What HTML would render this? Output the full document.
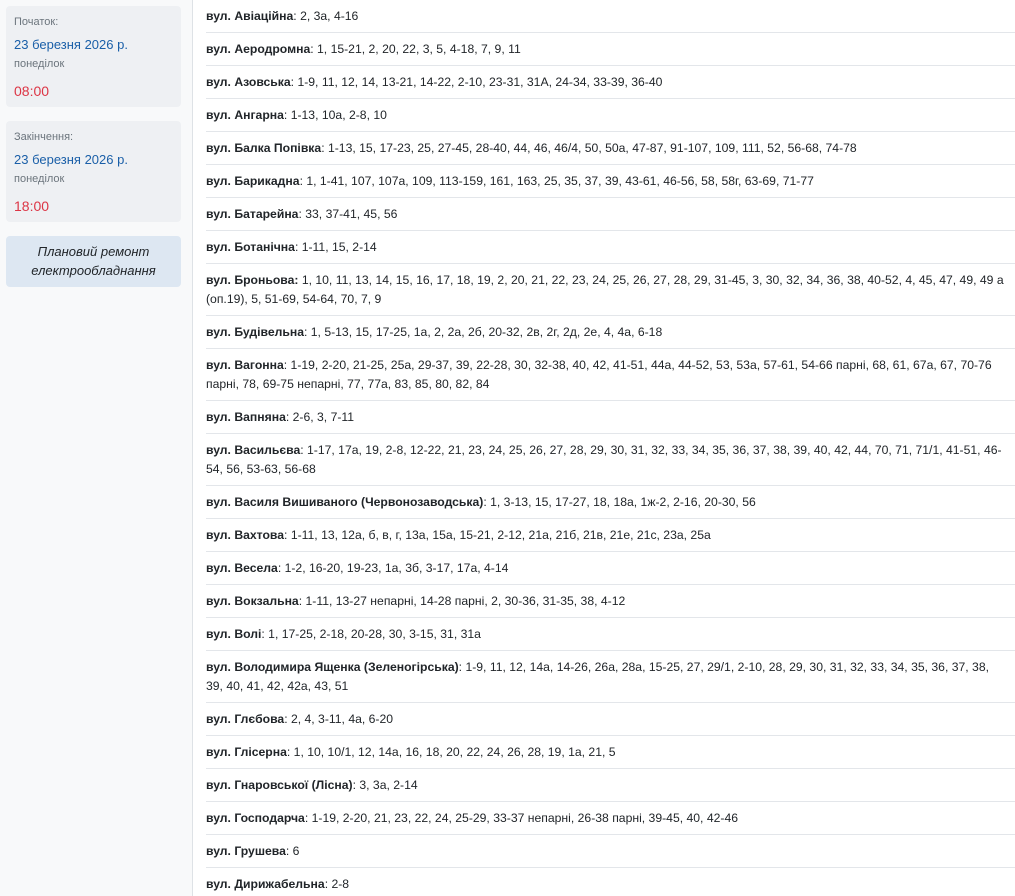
<!DOCTYPE html>
<html><head><meta charset="utf-8"><style>
*{box-sizing:border-box;margin:0;padding:0}
html,body{width:1015px;height:896px;overflow:hidden}
body{background:#fff;font-family:"Liberation Sans","DejaVu Sans",sans-serif;color:#212529;position:relative}
.side{position:absolute;left:0;top:0;width:193px;height:896px;background:#f8f9fa;border-right:1px solid #dee2e6}
.card{position:absolute;left:6px;width:175px;background:#eef0f3;border-radius:4px;padding:0 8px}
.lbl{font-size:11px;color:#6c757d;position:absolute;left:8px}
.dt{font-size:13px;color:#1a5fa8;position:absolute;left:8px}
.tm{font-size:14px;color:#dc3545;position:absolute;left:8px}
.note{position:absolute;left:6px;top:236px;width:175px;height:51px;background:#dde7f2;border-radius:4px;font-style:italic;font-size:13px;text-align:center;line-height:19px;padding-top:6px;color:#212529}
.list{position:absolute;left:206px;top:0;right:0}
.row{font-size:12.2px;line-height:19px;padding:7px 0 6px;border-bottom:1px solid #e3e6ea;white-space:nowrap}
.row b{font-weight:bold}
</style></head><body>
<div class="side">
<div class="card" style="top:6px;height:101px">
<div class="lbl" style="top:10px">Початок:</div>
<div class="dt" style="top:31px">23 березня 2026 р.</div>
<div class="lbl" style="top:52px">понеділок</div>
<div class="tm" style="top:77px">08:00</div>
</div>
<div class="card" style="top:121px;height:101px">
<div class="lbl" style="top:10px">Закінчення:</div>
<div class="dt" style="top:31px">23 березня 2026 р.</div>
<div class="lbl" style="top:52px">понеділок</div>
<div class="tm" style="top:77px">18:00</div>
</div>
<div class="note">Плановий ремонт<br>електрообладнання</div>
</div>
<div class="list">
<div class="row"><b>вул. Авіаційна</b>: 2, 3а, 4-16</div>
<div class="row"><b>вул. Аеродромна</b>: 1, 15-21, 2, 20, 22, 3, 5, 4-18, 7, 9, 11</div>
<div class="row"><b>вул. Азовська</b>: 1-9, 11, 12, 14, 13-21, 14-22, 2-10, 23-31, 31А, 24-34, 33-39, 36-40</div>
<div class="row"><b>вул. Ангарна</b>: 1-13, 10а, 2-8, 10</div>
<div class="row"><b>вул. Балка Попівка</b>: 1-13, 15, 17-23, 25, 27-45, 28-40, 44, 46, 46/4, 50, 50а, 47-87, 91-107, 109, 111, 52, 56-68, 74-78</div>
<div class="row"><b>вул. Барикадна</b>: 1, 1-41, 107, 107а, 109, 113-159, 161, 163, 25, 35, 37, 39, 43-61, 46-56, 58, 58г, 63-69, 71-77</div>
<div class="row"><b>вул. Батарейна</b>: 33, 37-41, 45, 56</div>
<div class="row"><b>вул. Ботанічна</b>: 1-11, 15, 2-14</div>
<div class="row"><b>вул. Броньова:</b> 1, 10, 11, 13, 14, 15, 16, 17, 18, 19, 2, 20, 21, 22, 23, 24, 25, 26, 27, 28, 29, 31-45, 3, 30, 32, 34, 36, 38, 40-52, 4, 45, 47, 49, 49 а<br>(оп.19), 5, 51-69, 54-64, 70, 7, 9</div>
<div class="row"><b>вул. Будівельна</b>: 1, 5-13, 15, 17-25, 1а, 2, 2а, 2б, 20-32, 2в, 2г, 2д, 2е, 4, 4а, 6-18</div>
<div class="row"><b>вул. Вагонна</b>: 1-19, 2-20, 21-25, 25а, 29-37, 39, 22-28, 30, 32-38, 40, 42, 41-51, 44а, 44-52, 53, 53а, 57-61, 54-66 парні, 68, 61, 67а, 67, 70-76<br>парні, 78, 69-75 непарні, 77, 77а, 83, 85, 80, 82, 84</div>
<div class="row"><b>вул. Вапняна</b>: 2-6, 3, 7-11</div>
<div class="row"><b>вул. Васильєва</b>: 1-17, 17а, 19, 2-8, 12-22, 21, 23, 24, 25, 26, 27, 28, 29, 30, 31, 32, 33, 34, 35, 36, 37, 38, 39, 40, 42, 44, 70, 71, 71/1, 41-51, 46-<br>54, 56, 53-63, 56-68</div>
<div class="row"><b>вул. Василя Вишиваного (Червонозаводська)</b>: 1, 3-13, 15, 17-27, 18, 18а, 1ж-2, 2-16, 20-30, 56</div>
<div class="row"><b>вул. Вахтова</b>: 1-11, 13, 12а, б, в, г, 13а, 15а, 15-21, 2-12, 21а, 21б, 21в, 21е, 21с, 23а, 25а</div>
<div class="row"><b>вул. Весела</b>: 1-2, 16-20, 19-23, 1а, 3б, 3-17, 17а, 4-14</div>
<div class="row"><b>вул. Вокзальна</b>: 1-11, 13-27 непарні, 14-28 парні, 2, 30-36, 31-35, 38, 4-12</div>
<div class="row"><b>вул. Волі</b>: 1, 17-25, 2-18, 20-28, 30, 3-15, 31, 31а</div>
<div class="row"><b>вул. Володимира Ященка (Зеленогірська)</b>: 1-9, 11, 12, 14а, 14-26, 26а, 28а, 15-25, 27, 29/1, 2-10, 28, 29, 30, 31, 32, 33, 34, 35, 36, 37, 38,<br>39, 40, 41, 42, 42а, 43, 51</div>
<div class="row"><b>вул. Глєбова</b>: 2, 4, 3-11, 4а, 6-20</div>
<div class="row"><b>вул. Глісерна</b>: 1, 10, 10/1, 12, 14а, 16, 18, 20, 22, 24, 26, 28, 19, 1а, 21, 5</div>
<div class="row"><b>вул. Гнаровської (Лісна)</b>: 3, 3а, 2-14</div>
<div class="row"><b>вул. Господарча</b>: 1-19, 2-20, 21, 23, 22, 24, 25-29, 33-37 непарні, 26-38 парні, 39-45, 40, 42-46</div>
<div class="row"><b>вул. Грушева</b>: 6</div>
<div class="row"><b>вул. Дирижабельна</b>: 2-8</div>
</div>
</body></html>
